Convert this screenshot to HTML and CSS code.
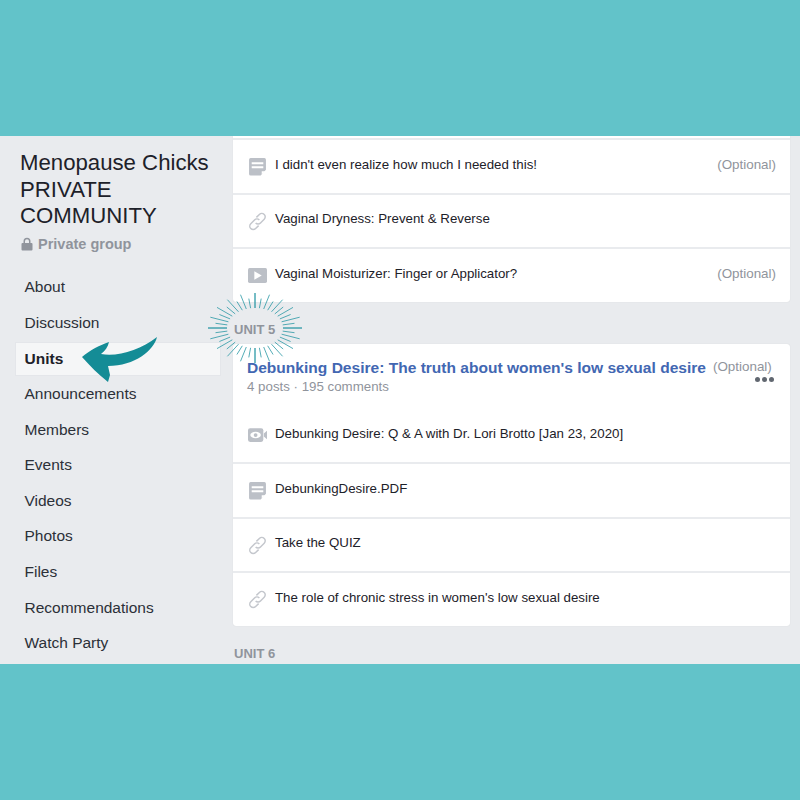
FILE: index.html
```html
<!DOCTYPE html>
<html lang="en">
<head>
  <meta charset="UTF-8" />
  <title>Menopause Chicks PRIVATE COMMUNITY</title>
  <link rel="stylesheet" href="styles.css">
</head>
<body>
  <div class="band band-top"></div>

  <div class="screen">
    <aside class="sidebar">
      <h1>Menopause Chicks PRIVATE COMMUNITY</h1>
      <div class="privacy">
        <svg class="lock" viewBox="0 0 12 14"><path d="M2.5 6V4.2a3.5 3.5 0 0 1 7 0V6h1a1 1 0 0 1 1 1v5.5a1 1 0 0 1-1 1h-9a1 1 0 0 1-1-1V7a1 1 0 0 1 1-1zM4 6h4V4.2a2 2 0 0 0-4 0z"/></svg>
        Private group
      </div>
      <nav>
        <a href="#">About</a>
        <a href="#">Discussion</a>
        <a href="#" class="active">Units</a>
        <a href="#">Announcements</a>
        <a href="#">Members</a>
        <a href="#">Events</a>
        <a href="#">Videos</a>
        <a href="#">Photos</a>
        <a href="#">Files</a>
        <a href="#">Recommendations</a>
        <a href="#">Watch Party</a>
      </nav>
    </aside>

    <main class="content">
      <section class="card card-cut">
        <div class="row">
          <svg class="icon" viewBox="0 0 18 18"><use href="#i-note"/></svg>
          <span class="row-title">I didn't even realize how much I needed this!</span>
          <span class="optional">(Optional)</span>
        </div>
        <div class="row">
          <svg class="icon" viewBox="0 0 18 18"><use href="#i-link"/></svg>
          <span class="row-title">Vaginal Dryness: Prevent &amp; Reverse</span>
        </div>
        <div class="row">
          <svg class="icon" viewBox="0 0 18 18"><use href="#i-play"/></svg>
          <span class="row-title">Vaginal Moisturizer: Finger or Applicator?</span>
          <span class="optional">(Optional)</span>
        </div>
      </section>

      <h2 class="unit unit-5">UNIT 5</h2>

      <section class="card">
        <div class="card-head">
          <div class="head-line">
            <a href="#" class="unit-title">Debunking Desire: The truth about women's low sexual desire</a>
            <span class="optional">(Optional)</span>
          </div>
          <div class="head-meta">
            <span>4 posts · 195 comments</span>
            <span class="dots"><i></i><i></i><i></i></span>
          </div>
        </div>
        <div class="row first">
          <svg class="icon" viewBox="0 0 18 18"><use href="#i-video"/></svg>
          <span class="row-title">Debunking Desire: Q &amp; A with Dr. Lori Brotto [Jan 23, 2020]</span>
        </div>
        <div class="row">
          <svg class="icon" viewBox="0 0 18 18"><use href="#i-note"/></svg>
          <span class="row-title">DebunkingDesire.PDF</span>
        </div>
        <div class="row">
          <svg class="icon" viewBox="0 0 18 18"><use href="#i-link"/></svg>
          <span class="row-title">Take the QUIZ</span>
        </div>
        <div class="row">
          <svg class="icon" viewBox="0 0 18 18"><use href="#i-link"/></svg>
          <span class="row-title">The role of chronic stress in women's low sexual desire</span>
        </div>
      </section>

      <h2 class="unit">UNIT 6</h2>
    </main>

    <!-- annotations drawn on top of the screenshot -->
    <svg class="burst" viewBox="-48 -37 96 74">
      <g id="rays">
        <path d="M28 0L47 0M27.7 3.1L39.5 4.7M26.6 6.2L44.7 10.8M24.9 9.1L35.6 13.5M22.7 11.8L38 20.6M19.8 14.1L28.2 21M16.5 16.2L27.6 28.3M12.7 17.8L18.1 26.5M8.7 19L14.5 33.3M4.4 19.8L6.2 29.4M0 20L0 35"/>
      </g>
      <use href="#rays" transform="scale(-1 1)"/>
      <use href="#rays" transform="scale(1 -1)"/>
      <use href="#rays" transform="scale(-1 -1)"/>
    </svg>
    <svg class="arrow" viewBox="80 335 80 50">
      <path d="M82 357C90 350 100 345 109 342C108 347 105 351 101 354C118 357 140 350 157 337C154 350 135 366 108 366L110 375L108 382C98 374 90 366 82 357Z"/>
    </svg>
  </div>

  <div class="band band-bottom"></div>

  <svg class="defs" width="0" height="0">
    <symbol id="i-note" viewBox="0 0 18 18">
      <path fill="#bcc0c7" d="M2.500 1h13a1.500 1.500 0 0 1 1.500 1.500V12l-5 5.500H2.500A1.500 1.500 0 0 1 1 16V2.500A1.500 1.500 0 0 1 2.500 1z"/>
      <path fill="#fff" d="M3.500 5h11v1.800h-11zM3.500 8.800h11v1.800h-11zM13 16.500v-3h3.500z"/>
    </symbol>
    <symbol id="i-link" viewBox="0 0 18 18">
      <g fill="none" stroke="#c4c7cd" stroke-width="1.400" transform="rotate(-45 9 9)">
        <path d="M7 12.500H3a3.250 3.250 0 0 1 0-6.500H8a3.250 3.250 0 0 1 3.250 3.250"/>
        <path d="M11 5.500H15a3.250 3.250 0 0 1 0 6.500H10a3.250 3.250 0 0 1-3.250-3.250"/>
      </g>
    </symbol>
    <symbol id="i-play" viewBox="0 0 18 18">
      <rect x="0" y="2" width="18" height="14" rx="1.500" fill="#bcc0c7"/>
      <path fill="#fff" d="M6 5l7 4-7 4z"/>
    </symbol>
    <symbol id="i-video" viewBox="0 0 18 18">
      <rect x="0" y="3" width="14.500" height="13" rx="2" fill="#bcc0c7"/>
      <path fill="#bcc0c7" d="M15 8l3-2.500v8L15 11z"/>
      <ellipse cx="7.200" cy="9.500" rx="5" ry="3" fill="#fff"/>
      <circle cx="7.200" cy="9.500" r="1.800" fill="#bcc0c7"/>
    </symbol>
  </svg>
</body>
</html>
```

FILE: styles.css
```css
* {
  margin: 0;
  padding: 0;
  box-sizing: border-box;
  font-family: 'Liberation Sans', Arial, sans-serif;
}

body {
  background: #62c3c9;
}

.band-top {
  height: 136px;
}

.band-bottom {
  height: 136px;
}

.screen {
  position: relative;
  display: flex;
  height: 528px;
  overflow: hidden;
  background: #e9ebee;
}

.sidebar {
  width: 233px;
  flex-shrink: 0;
  padding: 14px 12px 0 15px;
}

.sidebar h1 {
  margin-left: 5px;
  font-size: 22.2px;
  font-weight: normal;
  line-height: 26.5px;
  color: #1d2129;
}

.privacy {
  display: flex;
  align-items: center;
  gap: 5px;
  margin: 6px 0 0 6px;
  font-size: 14.5px;
  font-weight: bold;
  line-height: 17px;
  color: #90949c;
}

.lock {
  width: 12px;
  height: 14px;
  fill: #90949c;
}

nav {
  margin-top: 17px;
}

nav a {
  display: flex;
  align-items: center;
  height: 35.6px;
  padding-left: 9.5px;
  font-size: 15.5px;
  color: #2c3038;
  text-decoration: none;
}

nav a.active {
  height: 34px;
  margin: 1px 0 0.6px;
  background: #f5f6f7;
  border: 1px solid #e4e6ea;
  padding-left: 8.5px;
  font-weight: bold;
  color: #1d2129;
}

.content {
  flex: 1;
  padding-right: 10px;
}

.card {
  background: #fff;
  border-radius: 3px;
  box-shadow: 0 0 1px rgba(0, 0, 0, 0.15);
}

.card-cut {
  padding-top: 2px;
  border-radius: 0 0 3px 3px;
}

.row {
  display: flex;
  align-items: center;
  height: 54.5px;
  padding: 0 14px 0 15px;
  border-top: 2px solid #e9ebee;
  font-size: 13.3px;
  color: #1d2129;
}

.row.first {
  height: 55.5px;
  border-top: 0;
}

.row.first .row-title {
  margin-top: -2px;
}

.icon {
  width: 19px;
  height: 19px;
  flex-shrink: 0;
  margin: 1px 8px 0 0;
}

.row-title {
  flex: 1;
  margin-top: -4px;
}

.optional {
  margin-top: -4px;
  font-size: 13.4px;
  color: #90949c;
}

.unit {
  height: 43px;
  padding-top: 21.5px;
  font-size: 13px;
  font-weight: bold;
  line-height: 14px;
  color: #90949c;
  margin-left: 1px;
}

.unit-5 {
  height: 42px;
  padding-top: 21px;
}

.card-head {
  height: 63px;
  padding: 15px 18px 0 14px;
}

.head-line {
  display: flex;
  align-items: center;
  gap: 7px;
  line-height: 18px;
}

.head-line .optional {
  margin-top: -1px;
}

.unit-title {
  font-size: 15.55px;
  font-weight: bold;
  color: #4267b2;
  text-decoration: none;
}

.head-meta {
  display: flex;
  justify-content: space-between;
  margin-top: 2px;
  font-size: 13.3px;
  line-height: 16px;
  color: #90949c;
}

.dots {
  display: flex;
  gap: 2px;
  margin: -2px -2px 0 0;
}

.dots i {
  width: 5px;
  height: 5px;
  border-radius: 50%;
  background: #616770;
}

.burst {
  position: absolute;
  left: 207px;
  top: 155px;
  width: 96px;
  height: 74px;
  fill: none;
  stroke: #2a98a4;
  stroke-width: 0.8;
}

.arrow {
  position: absolute;
  left: 80px;
  top: 199px;
  width: 80px;
  height: 50px;
  fill: #148c96;
}

.defs {
  position: absolute;
}
```
